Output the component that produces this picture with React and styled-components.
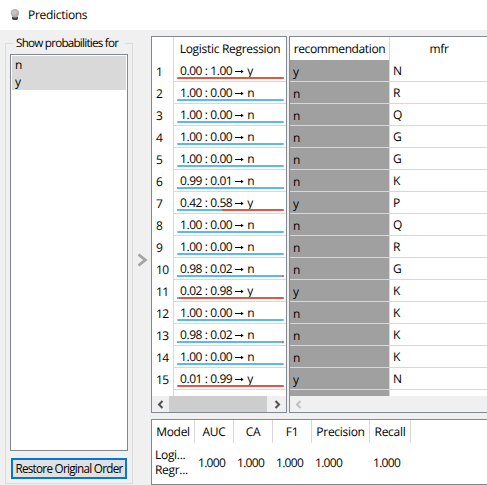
import React from "react";
import styled, { createGlobalStyle } from "styled-components";

const GlobalStyle = createGlobalStyle`
  * { box-sizing: border-box; }
  body { margin: 0; overflow: hidden; background: #f0f0f0; }
`;

const Window = styled.div`
  width: 487px;
  height: 485px;
  overflow: hidden;
  display: flex;
  flex-direction: column;
  background: #f0f0f0;
  color: #000;
  font-family: "Open Sans", sans-serif;
  font-size: 12px;
  line-height: 16px;
  letter-spacing: -0.3px;
  text-rendering: geometricPrecision;
  white-space: nowrap;
`;

const TitleBar = styled.header`
  height: 30px;
  flex: none;
  display: flex;
  align-items: center;
  gap: 8px;
  padding-left: 10px;
  background: #fff;
`;

const Title = styled.span`
  letter-spacing: -0.3px;
`;

const Content = styled.main`
  flex: 1;
  display: flex;
  padding: 6px 0 0 5px;
`;

const GroupBox = styled.fieldset`
  width: 128px;
  height: 448px;
  margin: 0;
  padding: 3px 4px 0;
  border: 1px solid #dcdcdc;
  display: flex;
  flex-direction: column;
  min-width: 0;
`;

const Legend = styled.legend`
  margin: 0 0 0 3px;
  padding: 0 0 0 3px;
  width: 112px;
  height: 15px;
  line-height: 14px;
  font-size: 11.7px;
  letter-spacing: -0.78px;
`;

const ClassList = styled.div`
  width: 118px;
  height: 397px;
  margin-bottom: 7px;
  padding: 1px;
  border: 1px solid #828790;
  background: #fff;
`;

const ClassItem = styled.div`
  height: 17px;
  line-height: 18px;
  padding-left: 3px;
  background: #d9d9d9;
`;

const RestoreButton = styled.button`
  width: 116px;
  height: 21px;
  margin: 0 0 0 1px;
  padding: 0;
  border: 2px solid #0078d7;
  background: #e1e1e1;
  color: #000;
  font: inherit;
  font-size: 11.7px;
  letter-spacing: -0.72px;
  line-height: 17px;
`;

const Splitter = styled.div`
  width: 18px;
  flex: none;
  padding: 217px 0 0 4px;
`;

const Results = styled.section`
  width: 336px;
  flex: none;
  display: flex;
  flex-direction: column;
  gap: 6px;
`;

const Tables = styled.div`
  display: flex;
  gap: 2px;
`;

const TableFrame = styled.div`
  width: ${(p) => p.$width}px;
  height: 377px;
  flex: none;
  overflow: hidden;
  display: flex;
  flex-direction: column;
  border: 1px solid #828790;
  border-right-width: ${(p) => (p.$cut ? 0 : 1)}px;
  background: #fff;
`;

const TableBody = styled.div`
  height: 359px;
  flex: none;
  display: flex;
  overflow: hidden;
`;

const Column = styled.div`
  width: ${(p) => p.$width}px;
  flex: none;
  border-right: ${(p) => (p.$divider ? "1px solid #d8d8d8" : "none")};
`;

const ColumnHead = styled.div`
  height: 23px;
  line-height: 24px;
  text-align: center;
  letter-spacing: ${(p) => p.$spacing || -0.3}px;
`;

const RowNumber = styled.div`
  height: 22px;
  padding-left: 4px;
  line-height: 23px;
  letter-spacing: -0.5px;
`;

const Cell = styled.div`
  height: 22px;
  padding-left: 3px;
  line-height: ${(p) => (p.$target ? 23 : 21)}px;
  border-bottom: 1px solid #d8d8d8;
  background: ${(p) => (p.$target ? "#a0a0a0" : "#fff")};
`;

const ProbabilityCell = styled(Cell)`
  padding: 0 2px 2px 3px;
  display: flex;
  flex-direction: column;
`;

const ProbabilityText = styled.span`
  height: 17px;
  padding: 2px 0 0 3px;
  display: flex;
  align-items: center;
  letter-spacing: -0.42px;
`;

const ProbabilityBar = styled.span`
  height: 2px;
  display: flex;
  border-radius: 1px;
  overflow: hidden;
  background: #e8553f;
`;

const ProbabilityFill = styled.span`
  height: 2px;
  background: #56bbf0;
`;

const ScrollBar = styled.div`
  height: 16px;
  flex: none;
  display: flex;
  align-items: center;
  background: #f0f0f0;
`;

const ScrollArrow = styled.span`
  width: 17px;
  height: 16px;
  flex: none;
  display: flex;
  align-items: center;
  justify-content: center;
`;

const ScrollThumb = styled.span`
  width: 98px;
  height: 16px;
  margin-right: 2px;
  background: #cdcdcd;
`;

const ScoreFrame = styled.div`
  height: 66px;
  border: 1px solid #828790;
  border-right: 0;
  background: #fff;
`;

const ScoreRow = styled.div`
  display: grid;
  grid-template-columns: 43px 39px 39px 39px 58px 41px;
`;

const ScoreHead = styled.div`
  height: 23px;
  line-height: 24px;
  text-align: center;
  border-right: 1px solid #d8d8d8;
`;

const Score = styled.div`
  padding: 12px 0 0 3px;
  letter-spacing: -0.7px;
`;

const ModelName = styled.div`
  padding: 4px 0 0 3px;
  line-height: 15px;
`;

const rows = [
  [0, "y", "N"], [1, "n", "R"], [1, "n", "Q"], [1, "n", "G"], [1, "n", "G"],
  [0.99, "n", "K"], [0.42, "y", "P"], [1, "n", "Q"], [1, "n", "R"],
  [0.98, "n", "G"], [0.02, "y", "K"], [1, "n", "K"], [0.98, "n", "K"],
  [1, "n", "K"], [0.01, "y", "N"],
];

const scoreHeads = ["Model", "AUC", "CA", "F1", "Precision", "Recall"];

const BulbIcon = () => (
  <svg width="10" height="12" viewBox="0 0 10 12">
    <path d="M2 7.500h6v2.200L7 11H3L2 9.700z" fill="#454545" />
    <circle cx="5" cy="4.300" r="4.200" fill="#b2b2b2" />
    <circle cx="4.500" cy="3.600" r="2.300" fill="#c5c5c5" />
  </svg>
);

const Arrow = () => (
  <svg width="9" height="7" viewBox="0 0 9 7">
    <path d="M0 3.500h7" stroke="#000" fill="none" />
    <path d="M6 1.700L8.700 3.500 6 5.300z" fill="#000" />
  </svg>
);

const Chevron = ({ flip, color }) => (
  <svg width="7" height="9" viewBox="0 0 7 9">
    <path d={flip ? "M5.500 1L2 4.500 5.500 8" : "M1.500 1L5 4.500 1.500 8"} stroke={color} strokeWidth="2" fill="none" />
  </svg>
);

const ArrowSlot = styled.span`
  display: flex;
  align-items: center;
  margin: 2px 3px 0 3px;
`;

const ProbabilityLabel = styled.span`
  display: flex;
  align-items: center;
  padding-top: 1px;
`;

export default function App() {
  return (
    <Window>
      <GlobalStyle />
      <TitleBar>
        <BulbIcon />
        <Title>Predictions</Title>
      </TitleBar>
      <Content>
        <GroupBox>
          <Legend>Show probabilities for</Legend>
          <ClassList>
            <ClassItem>n</ClassItem>
            <ClassItem>y</ClassItem>
          </ClassList>
          <RestoreButton>Restore Original Order</RestoreButton>
        </GroupBox>
        <Splitter>
          <svg width="12" height="14" viewBox="0 0 12 14">
            <path d="M1.500 1.500L8.300 7 1.500 12.500" stroke="#a3a3a3" strokeWidth="2.800" fill="none" />
          </svg>
        </Splitter>
        <Results>
          <Tables>
            <TableFrame $width={136}>
              <TableBody>
                <Column $width={22} $divider>
                  <ColumnHead />
                  {rows.map((_, i) => <RowNumber key={i}>{i + 1}</RowNumber>)}
                </Column>
                <Column $width={112}>
                  <ColumnHead>Logistic Regression</ColumnHead>
                  {rows.map(([p, label], i) => (
                    <ProbabilityCell key={i}>
                      <ProbabilityText>
                        <ProbabilityLabel>
                          {p.toFixed(2)} : {(1 - p).toFixed(2)}
                          <ArrowSlot><Arrow /></ArrowSlot>
                          {label}
                        </ProbabilityLabel>
                      </ProbabilityText>
                      <ProbabilityBar>
                        <ProbabilityFill style={{ width: `${p * 100}%` }} />
                      </ProbabilityBar>
                    </ProbabilityCell>
                  ))}
                </Column>
              </TableBody>
              <ScrollBar>
                <ScrollArrow><Chevron flip color="#505050" /></ScrollArrow>
                <ScrollThumb />
                <ScrollArrow><Chevron color="#505050" /></ScrollArrow>
              </ScrollBar>
            </TableFrame>
            <TableFrame $width={198} $cut>
              <TableBody>
                <Column $width={100} $divider>
                  <ColumnHead $spacing={-0.38}>recommendation</ColumnHead>
                  {rows.map(([, label], i) => <Cell $target key={i}>{label}</Cell>)}
                  <Cell $target />
                </Column>
                <Column $width={98}>
                  <ColumnHead>mfr</ColumnHead>
                  {rows.map(([, , mfr], i) => <Cell key={i}>{mfr}</Cell>)}
                </Column>
              </TableBody>
              <ScrollBar>
                <ScrollArrow><Chevron flip color="#bfbfbf" /></ScrollArrow>
              </ScrollBar>
            </TableFrame>
          </Tables>
          <ScoreFrame>
            <ScoreRow>
              {scoreHeads.map((name) => <ScoreHead key={name}>{name}</ScoreHead>)}
            </ScoreRow>
            <ScoreRow>
              <ModelName>Logi...<br />Regr...</ModelName>
              {scoreHeads.slice(1).map((name) => <Score key={name}>1.000</Score>)}
            </ScoreRow>
          </ScoreFrame>
        </Results>
      </Content>
    </Window>
  );
}
